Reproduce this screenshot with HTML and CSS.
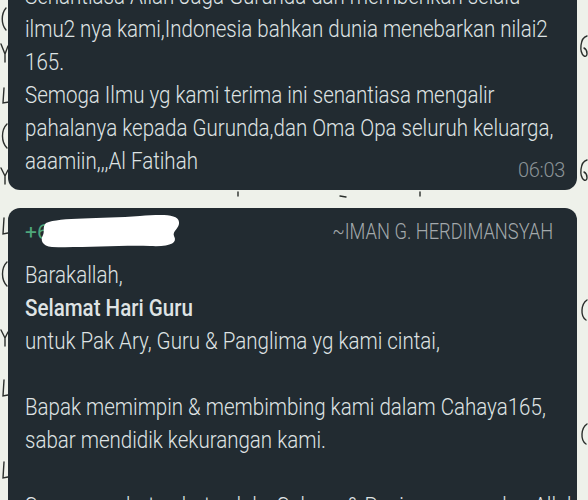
FILE: index.html
```html
<!DOCTYPE html>
<html lang="id">
<head>
  <meta charset="UTF-8" />
  <title>Chat</title>
  <link rel="stylesheet" href="styles.css">
</head>
<body>
  <svg class="doodles" width="588" height="500" viewBox="0 0 588 500">
    <g fill="none" stroke="#2b2f2c" stroke-width="1.4" stroke-linecap="round">
      <path d="M6 8 C1 14 1 24 6 30" />
      <path d="M1 44 L5 54 L8 46 M5 54 L5 62" />
      <path d="M4 88 L3 103 L9 102" />
      <path d="M7 124 C1 130 1 142 7 148" />
      <path d="M1 168 L5 176 L8 170 M5 176 L5 184" />
      <path d="M4 218 L3 234 L8 233" />
      <path d="M7 262 C1 268 1 280 7 286" />
      <path d="M1 330 L5 338 L8 332 M5 338 L5 346" />
      <path d="M4 380 L3 396 L8 395" />
      <path d="M4 462 L3 478 L8 477" />
      <path d="M587 36 C580 38 579 52 584 56 C588 58 588 50 584 48" />
      <path d="M587 160 C580 162 579 176 584 180 C588 182 588 174 584 172" />
      <path d="M587 300 C581 304 580 316 586 320" />
      <path d="M587 424 C581 428 580 440 586 444" />
      <path d="M238 192 L238 196 M420 192 L420 196 M340 196 L346 197" />
    </g>
  </svg>

  <main class="chat">
    <div class="bubble first">
      <p class="text">Senantiasa Allah Jaga Gurunda dan memberikan selalu<br>ilmu2 nya kami,Indonesia bahkan dunia menebarkan nilai2<br>165.<br>Semoga Ilmu yg kami terima ini senantiasa mengalir<br>pahalanya kepada Gurunda,dan Oma Opa seluruh keluarga,<br>aaamiin,,,Al Fatihah</p>
      <div class="meta">06:03</div>
    </div>

    <div class="bubble second">
      <div class="sender">
        <span class="phone">+6</span>
        <span class="name">~IMAN G. HERDIMANSYAH</span>
        <svg class="redact" width="142" height="36" viewBox="0 0 142 36">
          <path d="M6 10 C20 4 60 6 100 3 C118 2 138 0 139 9 C140 15 132 18 134 23 C138 30 130 34 110 33 C80 32 40 35 12 34 C2 33 0 27 3 22 C5 18 2 14 6 10 Z" fill="#fff" />
        </svg>
      </div>
      <p class="text">Barakallah,<br><b>Selamat Hari Guru</b><br>untuk Pak Ary, Guru &amp; Panglima yg kami cintai,<br><br>Bapak memimpin &amp; membimbing kami dalam Cahaya165,<br>sabar mendidik kekurangan kami.<br><br>Semoga sehat-sehat selalu, Sukses &amp; Panjang umur dan Allah</p>
    </div>
  </main>
</body>
</html>
```

FILE: styles.css
```css
* { box-sizing: border-box; }
html, body {
  margin: 0;
  padding: 0;
  width: 588px;
  height: 500px;
  overflow: hidden;
  background: #eef1ea;
  font-family: Roboto, "Liberation Sans", sans-serif;
}
.doodles {
  position: absolute;
  left: 0;
  top: 0;
}
.chat {
  position: relative;
  display: flex;
  flex-direction: column;
  gap: 18px;
  padding: 0 11px 0 8px;
}
.bubble {
  background: #222b31;
  border-radius: 12px;
  color: #dfe3e4;
  padding: 6px 24px 10px 17px;
}
.bubble.first {
  margin-top: -26px;
}
/* the chat font is a narrow one, squeeze Roboto to its width */
.text {
  margin: 0;
  font-size: 24px;
  font-weight: 300;
  line-height: 33px;
  white-space: nowrap;
  transform: scaleX(0.855);
  transform-origin: left center;
}
.text b {
  font-weight: 500;
}
.meta {
  margin-top: -18px;
  margin-right: -12px;
  text-align: right;
  font-size: 20px;
  font-weight: 300;
  line-height: 20px;
  letter-spacing: -0.3px;
  color: #8b9397;
}
.bubble.second {
  padding-top: 7px;
}
.sender {
  position: relative;
  display: flex;
  justify-content: space-between;
  align-items: baseline;
  line-height: 33px;
  margin-bottom: 10px;
}
.phone {
  font-size: 21px;
  color: #4fa77b;
}
.name {
  font-size: 22px;
  font-weight: 300;
  color: #a3a9ac;
  transform: scaleX(0.83);
  transform-origin: right center;
}
.redact {
  position: absolute;
  left: 15px;
  top: -2px;
}
```
